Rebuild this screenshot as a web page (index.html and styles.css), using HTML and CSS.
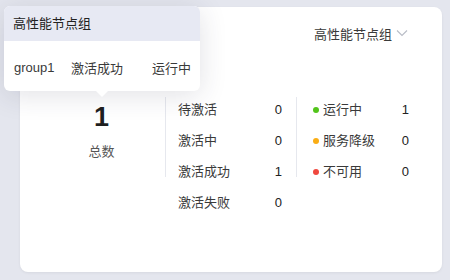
FILE: index.html
```html
<html lang="zh-CN">

<head>
	<title>高性能节点组</title>
	<meta charset="utf-8">
	<meta name="viewport" content="width=device-width, initial-scale=1.0">
	<link rel="stylesheet" href="styles.css">
</head>

<body>
	<div class="card">
		<div class="head">
			<span>高性能节点组</span>
			<svg class="chevron" width="12" height="8" viewBox="0 0 12 8">
				<path d="M1 1.5 L6 6.5 L11 1.5" fill="none" stroke="#b8bcc6" stroke-width="1.1"></path>
			</svg>
		</div>

		<div class="stats">
			<div class="total">
				<div class="total-num">1</div>
				<div class="total-label">总数</div>
			</div>
			<div class="devider"></div>

			<div class="list active">
				<div class="row"><span>待激活</span><b>0</b></div>
				<div class="row"><span>激活中</span><b>0</b></div>
				<div class="row"><span>激活成功</span><b>1</b></div>
				<div class="row"><span>激活失败</span><b>0</b></div>
			</div>
			<div class="devider"></div>

			<div class="list status">
				<div class="row"><span><i class="dot green"></i>运行中</span><b>1</b></div>
				<div class="row"><span><i class="dot orange"></i>服务降级</span><b>0</b></div>
				<div class="row"><span><i class="dot red"></i>不可用</span><b>0</b></div>
			</div>
		</div>
	</div>

	<div class="tooltip">
		<div class="tooltip-title">高性能节点组</div>
		<div class="tooltip-body">
			<span>group1</span>
			<span>激活成功</span>
			<span>运行中</span>
		</div>
	</div>
</body>
</html>
```

FILE: styles.css
```css
html, body {
	margin: 0;
	padding: 0;
	color: #3a3a3a;
	font-family: "Liberation Sans", "Noto Sans CJK SC", sans-serif;
	font-size: 13px;
}

*, *:before, *:after {
	box-sizing: border-box;
}

body {
	background: #e4e6ee;
	padding: 7px 8px 8px 20px;
	height: 280px;
	position: relative;
}

.card {
	background: #fff;
	border-radius: 8px;
	height: 265px;
	padding: 16px 34px 0 18px;
	box-shadow: 0 1px 3px rgba(0, 0, 0, .06);
}

.head {
	display: flex;
	justify-content: flex-end;
	align-items: center;
	height: 20px;
}

.head .chevron {
	margin-left: 4px;
}

.stats {
	display: flex;
	align-items: flex-start;
	margin-top: 54px;
}

.stats > div {
	flex-shrink: 0;
}

.total {
	width: 127px;
	height: 81px;
	display: flex;
	flex-direction: column;
	align-items: center;
	padding-top: 8px;
}

.total-num {
	font-size: 27px;
	font-weight: bold;
	line-height: 24px;
	color: #1f1f1f;
}

.total-label {
	margin-top: 16px;
	color: #555;
	line-height: 14px;
}

.devider {
	width: 1px;
	height: 80px;
	background: #e6e8ee;
}

.list {
	display: flex;
	flex-direction: column;
	gap: 11px;
	margin-top: 3px;
}

.list .row {
	display: flex;
	justify-content: space-between;
	align-items: center;
	height: 20px;
	line-height: 20px;
}

.list .row b {
	font-weight: normal;
	color: #222;
}

.active {
	width: 130px;
	padding: 0 14px 0 12px;
}

.status {
	width: 130px;
	padding: 0 18px 0 16px;
}

.dot {
	display: inline-block;
	width: 6px;
	height: 6px;
	border-radius: 50%;
	margin-right: 4px;
	vertical-align: 1px;
}

.dot.green {
	background: #52c41a;
}

.dot.orange {
	background: #faad14;
}

.dot.red {
	background: #f0483e;
}

.tooltip {
	position: absolute;
	top: 6px;
	left: 4px;
	width: 196px;
	height: 85px;
	background: #fff;
	border-radius: 6px;
	box-shadow: 0 4px 28px rgba(40, 45, 70, .14);
}

.tooltip:after {
	content: "";
	position: absolute;
	left: 92px;
	bottom: -6px;
	border-left: 6px solid transparent;
	border-right: 6px solid transparent;
	border-top: 6px solid #fff;
}

.tooltip-title {
	height: 35px;
	line-height: 35px;
	padding-left: 9px;
	background: #e7e9f3;
	border-radius: 6px 6px 0 0;
	color: #222;
}

.tooltip-body {
	display: grid;
	grid-template-columns: 57px 81px auto;
	align-items: center;
	height: 50px;
	padding: 2px 0 0 10px;
}
```
